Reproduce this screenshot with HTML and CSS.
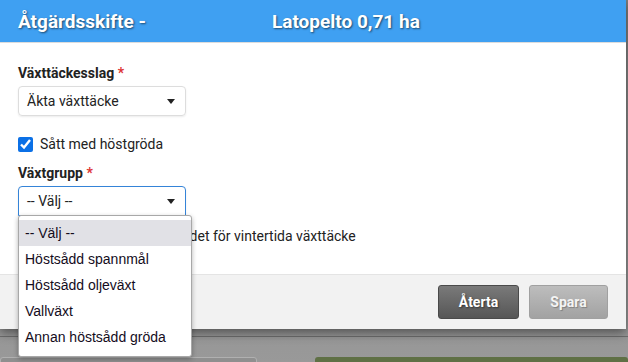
FILE: index.html
```html
<!DOCTYPE html>
<html lang="sv">
<head>
    <meta charset="UTF-8">
    <meta name="viewport" content="width=device-width, initial-scale=1.0">
    <title>Åtgärdsskifte</title>
    <link rel="stylesheet" href="styles.css">
</head>
<body>

    <!-- dialog -->
    <div class="modal">
        <div class="modal-head">
            <span class="head-title">Åtgärdsskifte -</span>
            <span class="head-name">Latopelto 0,71 ha</span>
        </div>

        <div class="modal-body">
            <label class="field-label">Växttäckesslag <span class="req">*</span></label>
            <div class="select">Äkta växttäcke<span class="arrow"></span></div>

            <label class="check-row"><input type="checkbox" checked> Sått med höstgröda</label>

            <label class="field-label">Växtgrupp <span class="req">*</span></label>
            <div class="select-wrap">
                <div class="select open">-- Välj --<span class="arrow"></span></div>
                <!-- öppen lista -->
                <ul class="options">
                    <li class="active">-- Välj --</li>
                    <li>Höstsådd spannmål</li>
                    <li>Höstsådd oljeväxt</li>
                    <li>Vallväxt</li>
                    <li>Annan höstsådd gröda</li>
                </ul>
            </div>

            <label class="check-row last"><input type="checkbox"> Skiftet anmäls in till stödet för vintertida växttäcke</label>
        </div>

        <div class="modal-foot">
            <button class="btn btn-dark">Återta</button>
            <button class="btn btn-light" disabled>Spara</button>
        </div>
    </div>

    <!-- sidan bakom -->
    <div class="behind">
        <div class="box-left"></div>
        <div class="box-green"></div>
    </div>

</body>
</html>
```

FILE: styles.css
```css
body {
    margin: 0;
    font-family: Roboto, "Liberation Sans", Arial, sans-serif;
    background: linear-gradient(#7c7c7c, #999);
    height: 362px;
    overflow: hidden;
}
.modal{
    width: 626px;
    background: #fff;
    box-shadow: 0 4px 10px rgba(0, 0, 0, 0.45);
    position: relative;
    z-index: 2;
}
.modal-head{
    height: 42px;
    background: #3fa0f2;
    border-bottom: 1px solid #dcdcdc;
    display: flex;
    align-items: center;
    padding-left: 18px;
    color: #fff;
    font-weight: bold;
    font-size: 19px;
    text-shadow: 1px 1px 2px rgba(0, 0, 0, 0.55);
}
.head-name{
    margin-left: 126px;
}
.modal-body{
    padding: 22px 18px 0;
    height: 209px;
    font-size: 14px;
    color: #222;
}
.field-label{
    display: block;
    font-weight: bold;
    font-size: 14px;
    line-height: 16px;
    margin-bottom: 5px;
}
.req{
    color: #d33;
}
.select{
    width: 168px;
    height: 30px;
    box-sizing: border-box;
    border: 1px solid #ddd;
    border-radius: 4px;
    box-shadow: 0 1px 2px rgba(0, 0, 0, 0.08);
    padding: 0 8px;
    line-height: 28px;
    position: relative;
}
.select.open{
    border-color: #3584d8;
    border-radius: 4px 4px 0 0;
}
.arrow{
    position: absolute;
    right: 10px;
    top: 12px;
    border-left: 4px solid transparent;
    border-right: 4px solid transparent;
    border-top: 5px solid #222;
}
.check-row{
    display: flex;
    align-items: center;
    gap: 7px;
    margin: 20px 0 13px;
    line-height: 16px;
}
.check-row input{
    width: 15px;
    height: 15px;
    margin: 0;
    accent-color: #0b70e6;
}
.check-row.last{
    margin: 12px 0 0;
    gap: 11px;
}
.select-wrap{
    position: relative;
}
.options{
    position: absolute;
    top: 29px;
    left: 0;
    width: 174px;
    box-sizing: border-box;
    margin: 0;
    padding: 4px 0 6px;
    list-style: none;
    background: #fff;
    border: 1px solid #a8a8a8;
    border-radius: 3px;
    box-shadow: 0 2px 5px rgba(0, 0, 0, 0.3);
    font-family: "Liberation Sans", Arial, sans-serif;
    font-size: 14px;
    color: #140c1c;
    z-index: 5;
}
.options li{
    height: 26px;
    line-height: 26px;
    padding-left: 6px;
}
.options li.active{
    background: #e1e1e6;
}
.modal-foot{
    height: 54px;
    background: #f2f2f2;
    border-top: 1px solid #e4e4e4;
    display: flex;
    justify-content: flex-end;
    align-items: center;
    gap: 10px;
    padding-right: 18px;
}
.btn{
    width: 81px;
    height: 34px;
    border-radius: 3px;
    font-family: Roboto, sans-serif;
    font-weight: bold;
    font-size: 14px;
    color: #fff;
    text-shadow: 1px 1px 2px rgba(0, 0, 0, 0.5);
}
.btn-dark{
    background: linear-gradient(#7a7a7a, #565656);
    border: 1px solid #4a4a4a;
}
.btn-light{
    width: 79px;
    background: linear-gradient(#bdbdbd, #a2a2a2);
    border: 1px solid #a0a0a0;
    color: #f4f4f4;
    text-shadow: 1px 1px 1px rgba(0, 0, 0, 0.25);
}
.behind{
    display: flex;
    gap: 58px;
    margin-top: 7px;
    border-top: 1px solid #6e6e6e;
    padding-top: 20px;
}
.box-left{
    width: 255px;
    height: 20px;
    border: 1px solid #b0b0b0;
    border-radius: 3px;
    background: #8f8f8f;
}
.box-green{
    flex: 1;
    height: 20px;
    border-radius: 3px;
    background: #5f7045;
}
```
